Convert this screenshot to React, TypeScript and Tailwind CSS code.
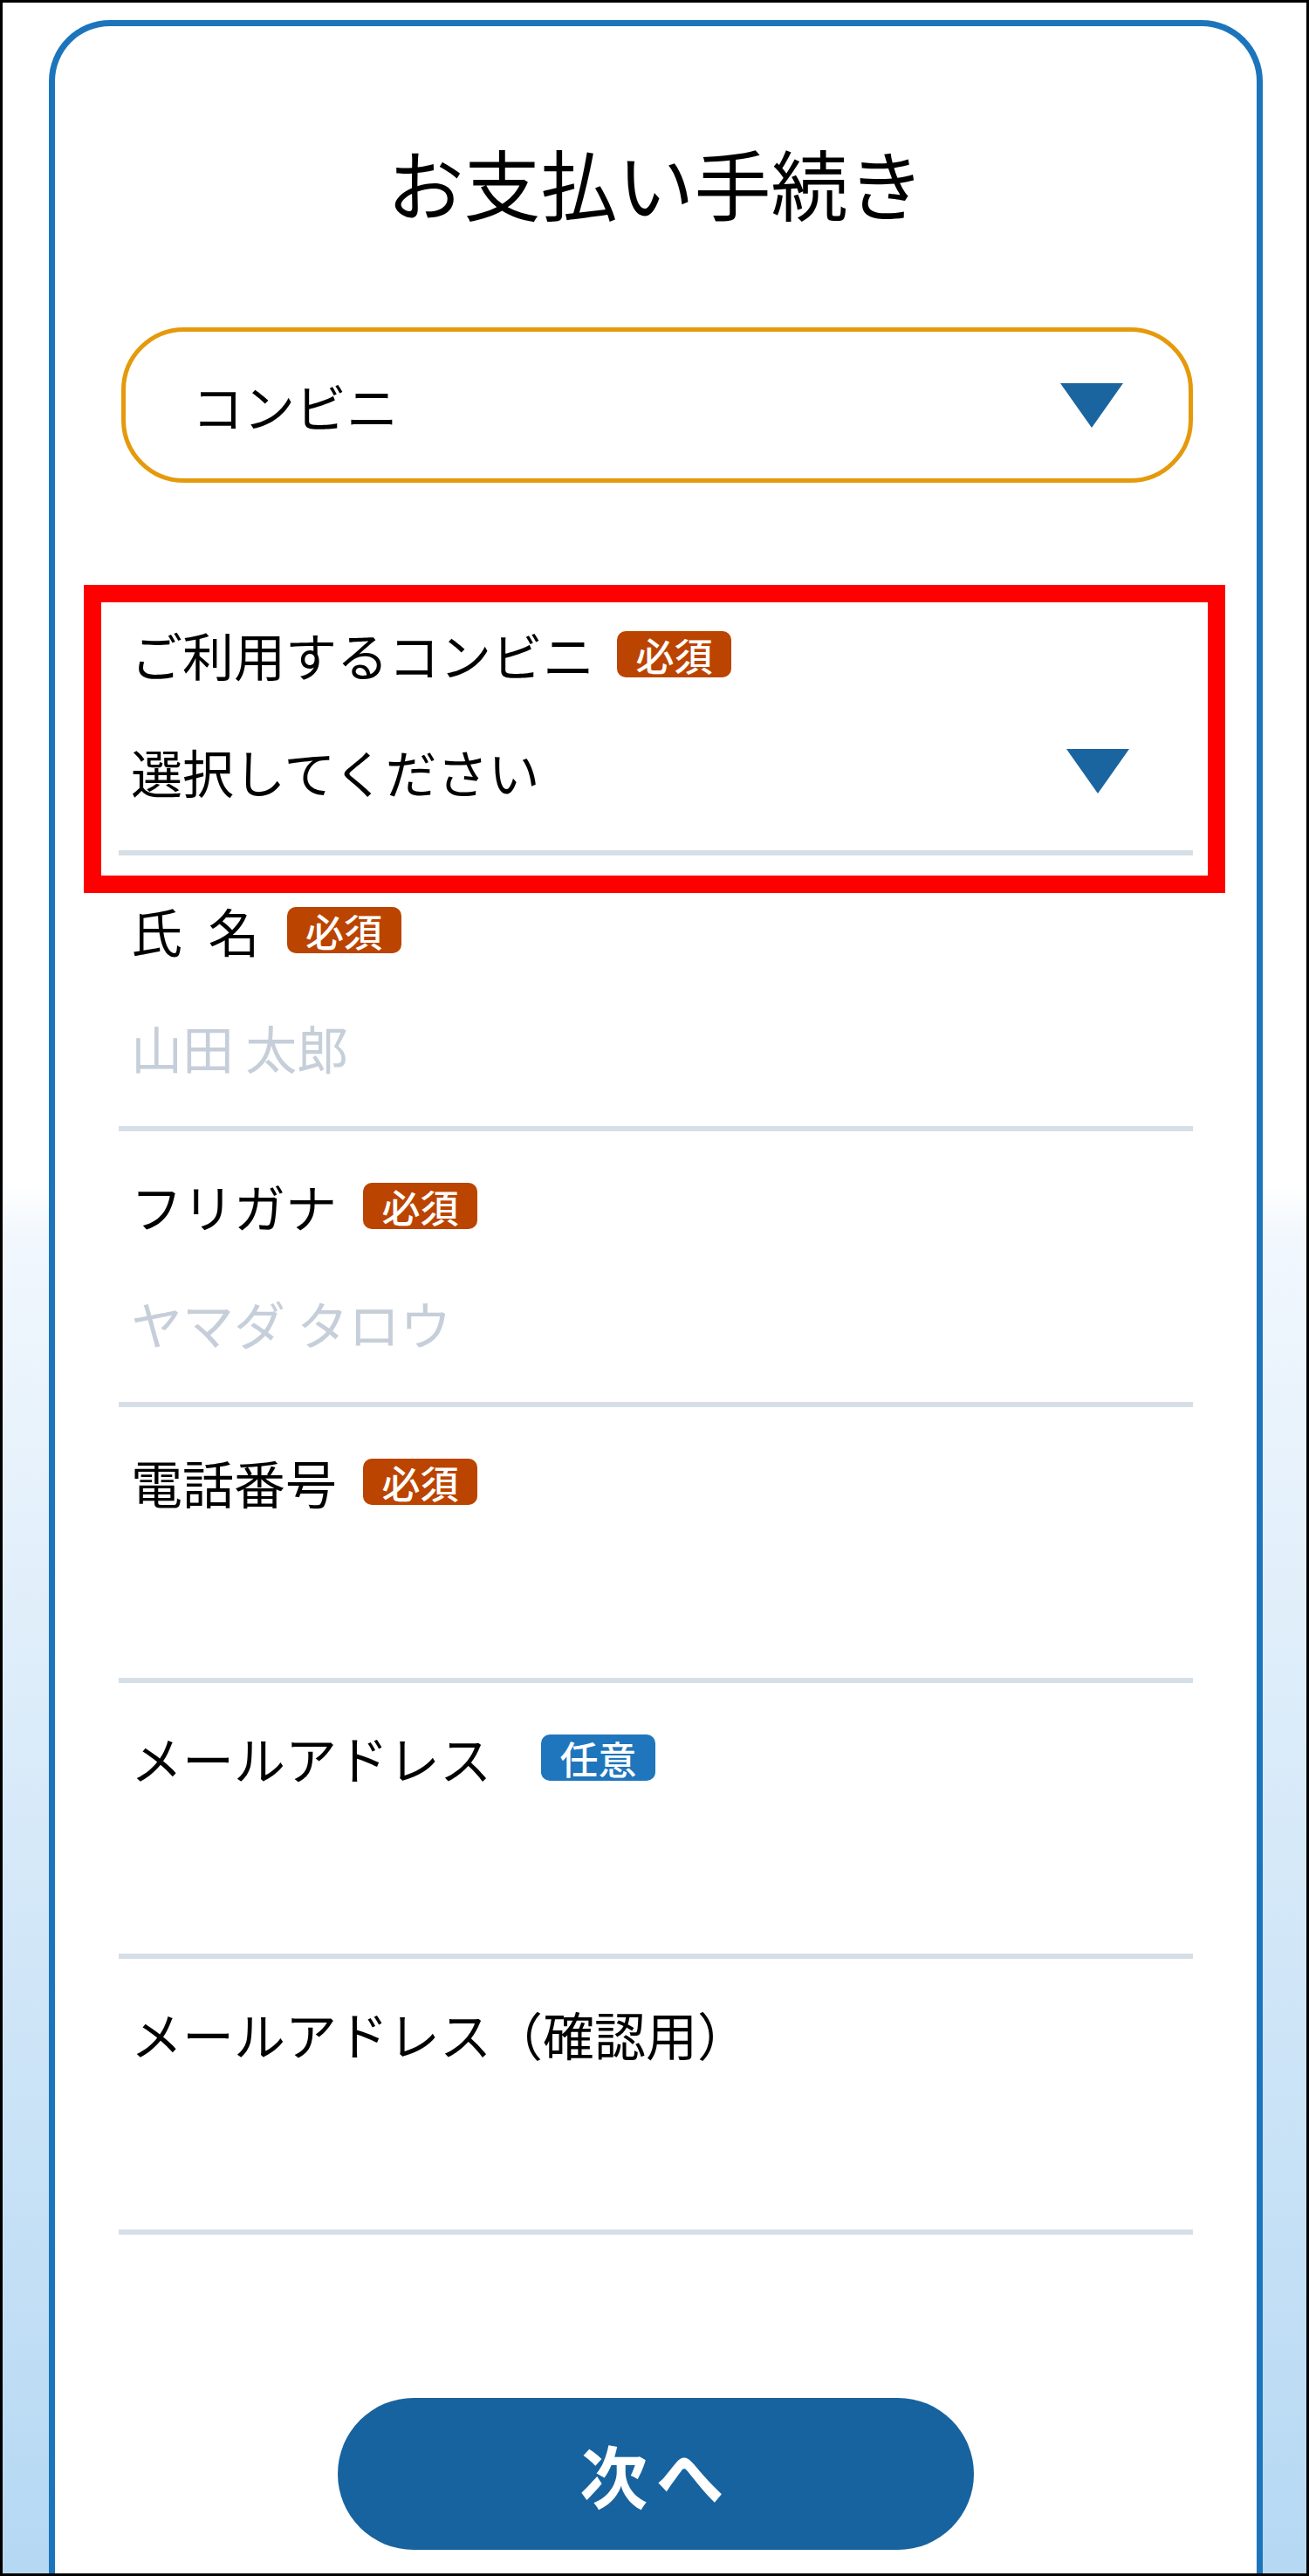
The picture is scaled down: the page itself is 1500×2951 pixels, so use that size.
import React from 'react';

interface Field {
  label: string;
  badge?: 'required' | 'optional';
  badgeGap: string;
  placeholder?: string;
  value?: string;
  select?: boolean;
  highlight?: boolean;
}

const fields: Field[] = [
  { label: 'ご利用するコンビニ', badge: 'required', badgeGap: 'ml-[26px]', value: '選択してください', select: true, highlight: true },
  { label: '氏\u2002名', badge: 'required', badgeGap: 'ml-[31px]', placeholder: '山田 太郎' },
  { label: 'フリガナ', badge: 'required', badgeGap: 'ml-[30px]', placeholder: 'ヤマダ タロウ' },
  { label: '電話番号', badge: 'required', badgeGap: 'ml-[30px]' },
  { label: 'メールアドレス', badge: 'optional', badgeGap: 'ml-[57px]' },
  { label: 'メールアドレス（確認用）', badgeGap: '' },
];

function Triangle() {
  return (
    <svg width="72" height="51" viewBox="0 0 72 51" className="shrink-0">
      <polygon points="0,0 72,0 36,51" fill="#1a65a0" />
    </svg>
  );
}

function Badge({ kind, className }: { kind: 'required' | 'optional'; className: string }) {
  const color = kind === 'required' ? 'bg-[#bb4400]' : 'bg-[#1f76bd]';
  return (
    <span
      className={`${className} ${color} flex h-[53px] w-[131px] shrink-0 items-center justify-center rounded-[10px] text-[44px] font-medium leading-none text-white`}
    >
      {kind === 'required' ? '必須' : '任意'}
    </span>
  );
}

function FormField({ field }: { field: Field }) {
  return (
    <div className="relative pt-[57px]">
      {field.highlight && (
        // 注釈用の赤枠
        <div className="pointer-events-none absolute top-[6px] -bottom-[43px] -left-[40px] -right-[37px] border-[20px] border-[#ff0000]" />
      )}
      <div className="flex h-[57px] items-center pl-[14px]">
        <span className="text-[59px] leading-none text-black">{field.label}</span>
        {field.badge && <Badge kind={field.badge} className={field.badgeGap} />}
      </div>
      <div className="mt-[77px] flex h-[57px] items-center justify-between pl-[14px] pr-[73px]">
        {field.value && <span className="text-[59px] leading-none text-black">{field.value}</span>}
        {field.placeholder && (
          <span className="text-[59px] leading-none text-[#c6cfd9]">{field.placeholder}</span>
        )}
        {field.select && <Triangle />}
      </div>
      <div className="mt-[62px] h-[6px] bg-[#d6dfe7]" />
    </div>
  );
}

export default function App() {
  return (
    <div
      className="flex h-[2951px] w-[1500px] flex-col overflow-hidden border-[3px] border-black bg-[linear-gradient(to_bottom,#ffffff_0%,#ffffff_46%,#f1f7fd_48%,#b5d8f3_100%)]"
      style={{ fontFamily: '"Noto Sans CJK JP", "Noto Sans", sans-serif' }}
    >
      <div className="ml-[53px] mr-[50px] mt-[20px] flex-1 rounded-t-[70px] border-[7px] border-b-0 border-[#1c75bc] bg-white px-[73px]">
        <h1 className="pt-[134px] text-center text-[88px] font-normal leading-none text-black">お支払い手続き</h1>

        <div className="ml-[3px] mt-[123px] flex h-[178px] items-center justify-between rounded-[72px] border-[5px] border-[#e59a0c] pl-[76px] pr-[75px]">
          <span className="text-[59px] leading-none text-black">コンビニ</span>
          <Triangle />
        </div>

        <div className="mt-[111px]">
          {fields.map(field => (
            <FormField key={field.label} field={field} />
          ))}
        </div>

        <button
          type="button"
          className="mx-auto mt-[187px] flex h-[174px] w-[729px] items-center justify-center rounded-full bg-[#17639f] text-[78px] font-bold leading-none tracking-[0.12em] text-white"
        >
          次へ
        </button>
      </div>
    </div>
  );
}
